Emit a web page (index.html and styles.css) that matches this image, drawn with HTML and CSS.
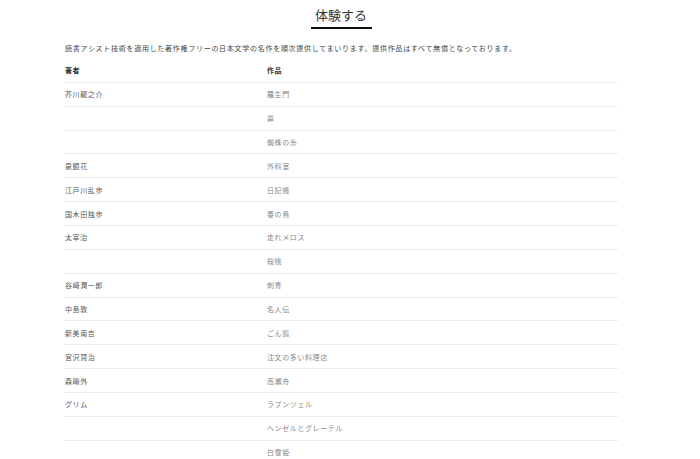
FILE: index.html
```html
<!DOCTYPE html>
<html lang="ja">
<head>
<meta charset="utf-8">
<title>体験する</title>
<link rel="stylesheet" href="styles.css">
</head>
<body>
<main class="page">
  <header class="heading">
    <h1 class="heading-title">体験する</h1>
    <span class="heading-bar"></span>
  </header>
  <p class="lead">読書アシスト技術を適用した著作権フリーの日本文学の名作を順次提供してまいります。提供作品はすべて無償となっております。</p>
  <table class="works">
    <colgroup>
      <col class="col-author">
      <col class="col-work">
    </colgroup>
    <thead>
      <tr><th>著者</th><th>作品</th></tr>
    </thead>
    <tbody>
      <tr><td class="author">芥川龍之介</td><td class="work">羅生門</td></tr>
      <tr><td class="author"></td><td class="work">鼻</td></tr>
      <tr><td class="author"></td><td class="work">蜘蛛の糸</td></tr>
      <tr><td class="author">泉鏡花</td><td class="work">外科室</td></tr>
      <tr><td class="author">江戸川乱歩</td><td class="work">日記帳</td></tr>
      <tr><td class="author">国木田独歩</td><td class="work">春の鳥</td></tr>
      <tr><td class="author">太宰治</td><td class="work">走れメロス</td></tr>
      <tr><td class="author"></td><td class="work">桜桃</td></tr>
      <tr><td class="author">谷崎潤一郎</td><td class="work">刺青</td></tr>
      <tr><td class="author">中島敦</td><td class="work">名人伝</td></tr>
      <tr><td class="author">新美南吉</td><td class="work">ごん狐</td></tr>
      <tr><td class="author">宮沢賢治</td><td class="work">注文の多い料理店</td></tr>
      <tr><td class="author">森鴎外</td><td class="work">高瀬舟</td></tr>
      <tr><td class="author">グリム</td><td class="work">ラプンツェル</td></tr>
      <tr><td class="author"></td><td class="work">ヘンゼルとグレーテル</td></tr>
      <tr><td class="author"></td><td class="work">白雪姫</td></tr>
    </tbody>
  </table>
</main>
</body>
</html>
```

FILE: styles.css
```css
html, body {
  margin: 0;
  padding: 0;
  background: #ffffff;
}

body {
  font-family: "Noto Sans CJK JP", "Noto Sans", sans-serif;
  color: #444;
}

.page {
  width: 554px;
  margin-left: 64px;
}

.heading {
  display: flex;
  flex-direction: column;
  align-items: center;
  padding-top: 5px;
}

.heading-title {
  margin: 0;
  font-size: 13px;
  line-height: 20px;
  font-weight: 400;
  color: #333;
}

.heading-bar {
  display: block;
  width: 61px;
  height: 2px;
  margin-top: 2px;
  background: #111;
}

.lead {
  margin: 14px 0 0 1px;
  font-size: 7px;
  letter-spacing: 0.72px;
  line-height: 10px;
  color: #444;
  white-space: nowrap;
}

.works {
  width: 100%;
  margin-top: 6px;
  border-collapse: collapse;
  table-layout: fixed;
  font-size: 7px;
  letter-spacing: 0.6px;
}

.col-author {
  width: 202px;
}

.works th,
.works td {
  height: 22.87px;
  padding: 0 0 0 1px;
  text-align: left;
  vertical-align: middle;
  border-bottom: 1px solid #ececec;
  line-height: 10px;
}

.works th {
  font-weight: 700;
  color: #333;
}

.author {
  color: #555;
}

.work {
  color: #888;
}
```
